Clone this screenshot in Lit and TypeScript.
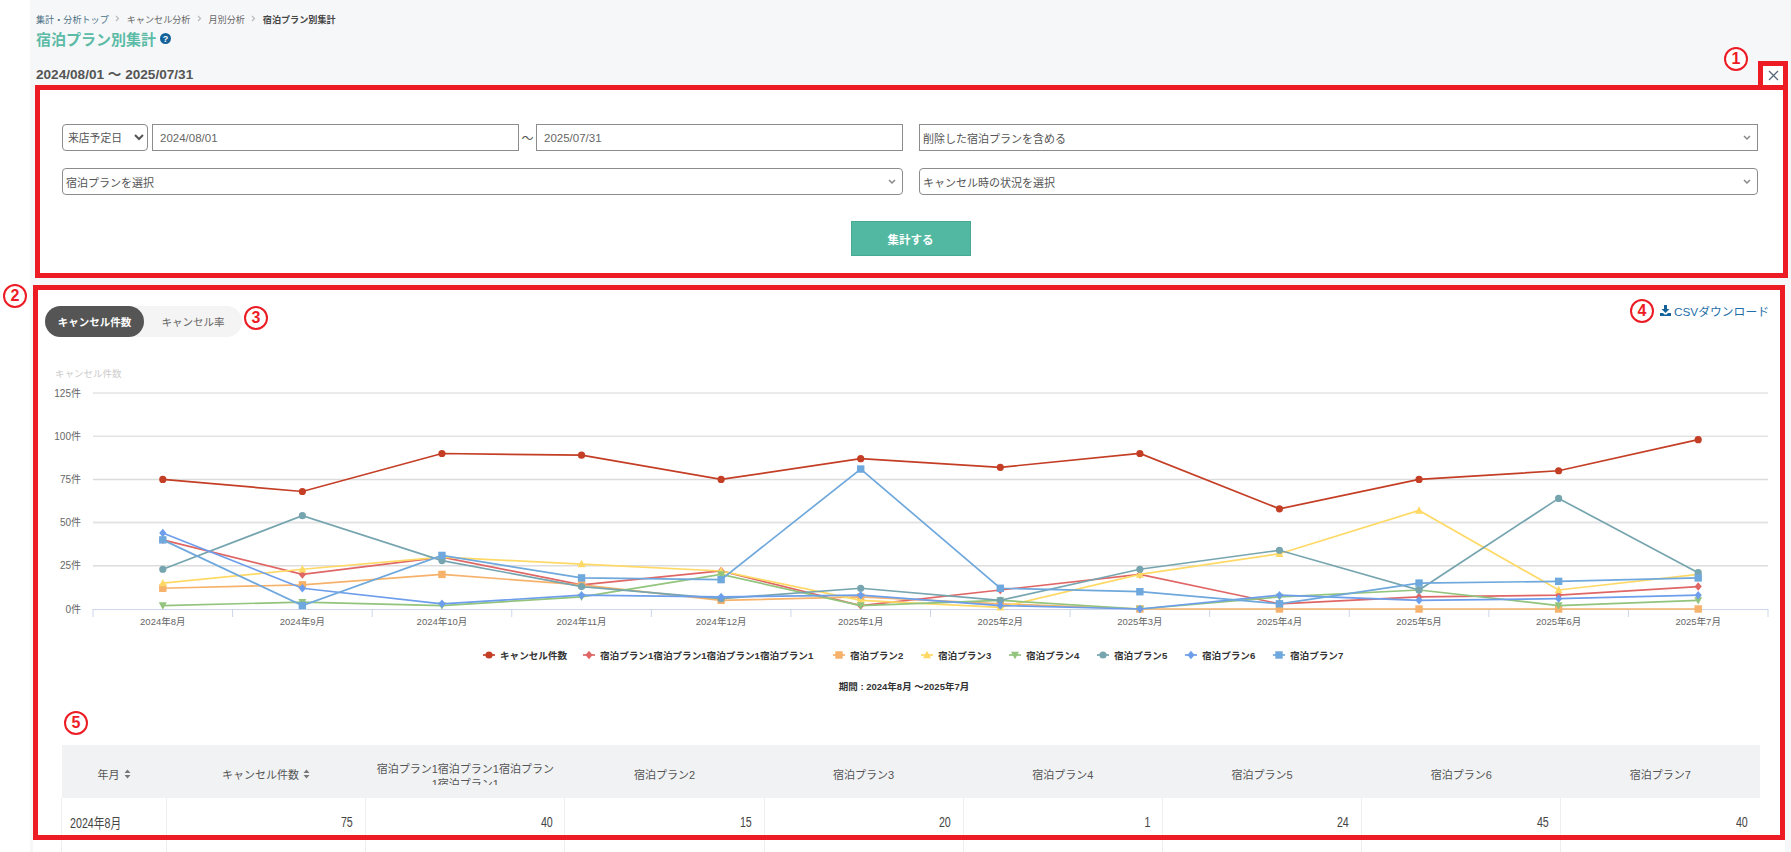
import { LitElement, html, css, svg } from "lit";
import { customElement } from "lit/decorators.js";

const X0 = 93;
const STEP = (1768 - 93) / 12;
const Y0 = 609;
const UNIT = 1.728;
const px = (i: number) => X0 + STEP * (i + 0.5);
const py = (v: number) => Y0 - v * UNIT;

type Shape = "circle" | "diamond" | "square" | "up" | "down";
interface Series { name: string; color: string; shape: Shape; data: number[]; legendX: number; }

const SERIES: Series[] = [
  { name: "キャンセル件数", color: "#c43e25", shape: "circle", legendX: 489, data: [75, 68, 90, 89, 75, 87, 82, 90, 58, 75, 80, 98] },
  { name: "宿泊プラン1宿泊プラン1宿泊プラン1宿泊プラン1", color: "#e06666", shape: "diamond", legendX: 589, data: [40, 20, 30, 14, 22, 2, 11, 20, 3, 7, 8, 13] },
  { name: "宿泊プラン2", color: "#f6b26b", shape: "square", legendX: 839, data: [12, 14, 20, 14, 5, 7, 3, 0, 0, 0, 0, 0] },
  { name: "宿泊プラン3", color: "#ffd966", shape: "up", legendX: 927, data: [15, 23, 30, 26, 22, 5, 1, 20, 32, 57, 11, 20] },
  { name: "宿泊プラン4", color: "#93c47d", shape: "down", legendX: 1015, data: [2, 4, 2, 7, 20, 2, 5, 0, 7, 11, 2, 5] },
  { name: "宿泊プラン5", color: "#76a5af", shape: "circle", legendX: 1103, data: [23, 54, 28, 13, 6, 12, 5, 23, 34, 11, 64, 21] },
  { name: "宿泊プラン6", color: "#6d9eeb", shape: "diamond", legendX: 1191, data: [44, 12, 3, 8, 7, 8, 2, 0, 8, 5, 6, 8] },
  { name: "宿泊プラン7", color: "#6fa8dc", shape: "square", legendX: 1279, data: [40, 2, 31, 18, 17, 81, 12, 10, 3, 15, 16, 18] },
];

const MONTHS = ["2024年8月", "2024年9月", "2024年10月", "2024年11月", "2024年12月", "2025年1月", "2025年2月", "2025年3月", "2025年4月", "2025年5月", "2025年6月", "2025年7月"];
const TICKS: { v: number; color: string; w: number }[] = [
  { v: 0, color: "", w: 0 },
  { v: 25, color: "#dcdcdc", w: 1.5 },
  { v: 50, color: "#e4e4e4", w: 2 },
  { v: 75, color: "#dcdcdc", w: 1.5 },
  { v: 100, color: "#d6d6d6", w: 1 },
  { v: 125, color: "#d6d6d6", w: 1 },
];

const ROWS = [
  ["2024年8月", "75", "40", "15", "20", "1", "24", "45", "40"],
  ["2024年9月", "68", "20", "14", "23", "4", "54", "12", "2"],
];

function marker(x: number, y: number, shape: Shape, color: string) {
  switch (shape) {
    case "circle":
      return svg`<circle cx=${x} cy=${y} r="3.6" fill=${color}></circle>`;
    case "square":
      return svg`<rect x=${x - 3.7} y=${y - 3.7} width="7.4" height="7.4" fill=${color}></rect>`;
    case "diamond":
      return svg`<path d="M${x} ${y - 4.2}L${x + 3.6} ${y}L${x} ${y + 4.2}L${x - 3.6} ${y}Z" fill=${color}></path>`;
    case "up":
      return svg`<path d="M${x} ${y - 4.2}L${x + 4} ${y + 3.2}L${x - 4} ${y + 3.2}Z" fill=${color}></path>`;
    default:
      return svg`<path d="M${x - 4} ${y - 3.2}L${x + 4} ${y - 3.2}L${x} ${y + 4.2}Z" fill=${color}></path>`;
  }
}

@customElement("app-root")
export class AppRoot extends LitElement {
  static styles = css`
    :host {
      display: block;
      position: relative;
      width: 1791px;
      height: 852px;
      overflow: hidden;
      background: #fff;
      font-family: "Liberation Sans", "Noto Sans CJK JP", sans-serif;
      color: #555;
    }
    *, *::after { box-sizing: border-box; }
    .main {
      margin-left: 30px;
      height: 852px;
      background: #f6f7f9;
      padding-top: 12px;
      display: flex;
      flex-direction: column;
    }
    .crumbs {
      display: flex;
      align-items: center;
      height: 13px;
      margin-left: 6px;
      font-size: 9.1px;
      color: #666;
    }
    .crumbs .home { color: #4a6f85; }
    .crumbs .cur { color: #444; font-weight: 700; }
    .crumbs .sep { width: 18px; display: flex; justify-content: center; }
    .title {
      display: flex;
      align-items: center;
      gap: 4px;
      height: 22px;
      margin: 2px 0 0 6px;
      font-size: 15px;
      font-weight: 700;
      color: #5cbba6;
    }
    .period-row {
      display: flex;
      justify-content: space-between;
      align-items: flex-end;
      height: 24px;
      margin: 12px 3px 0 6px;
    }
    .period {
      font-size: 13.6px;
      font-weight: 700;
      color: #555;
      line-height: 18px;
      padding-bottom: 1px;
    }
    .close {
      width: 30px;
      height: 24px;
      border: 5px solid #ed1c24;
      border-bottom: 0;
      background: #fff;
      display: flex;
      align-items: center;
      justify-content: center;
      padding: 0;
    }
    .search {
      width: 1753px;
      height: 193px;
      margin-left: 5px;
      border: 5px solid #ed1c24;
      background: #fff;
      padding: 34px 22px 0;
    }
    .search-grid {
      display: grid;
      grid-template-columns: 841px 839px;
      column-gap: 16px;
      row-gap: 17px;
    }
    .dates { display: flex; align-items: center; width: 841px; }
    select.kind {
      width: 86px;
      height: 27px;
      flex: none;
      border: 1px solid #8c8c8c;
      border-radius: 4px;
      background: #fff;
      font: 10.8px "Liberation Sans", "Noto Sans CJK JP", sans-serif;
      color: #555;
      padding: 0 0 0 1px;
      margin-right: 4px;
    }
    .date {
      flex: 1;
      height: 27px;
      border: 1px solid #8c8c8c;
      background: #fff;
      font-size: 11.5px;
      color: #666;
      display: flex;
      align-items: center;
      padding-left: 7px;
    }
    .wave { width: 17px; flex: none; text-align: center; font-size: 12px; color: #555; }
    .pick {
      height: 27px;
      border: 1px solid #8c8c8c;
      background: #fff;
      font-size: 11px;
      color: #555;
      display: flex;
      align-items: center;
      justify-content: space-between;
      padding: 0 6px 0 3px;
    }
    .pick.round { border-radius: 4px; }
    .actions { display: flex; justify-content: center; margin-top: 26px; padding-right: 2px; }
    .submit {
      width: 120px;
      height: 35px;
      border: 1px solid #47a993;
      background: #52b8a2;
      color: #fff;
      font: 700 11.5px "Liberation Sans", "Noto Sans CJK JP", sans-serif;
      padding: 0;
    }
    .result {
      position: relative;
      width: 1752px;
      height: 567px;
      margin: 7px 0 0 3px;
      background: #fff;
      padding: 21px 5px 0 12px;
      overflow: hidden;
    }
    .result::after {
      content: "";
      position: absolute;
      left: 0;
      right: 0;
      top: 0;
      height: 555px;
      border: 5px solid #ed1c24;
      pointer-events: none;
    }
    .toolbar { display: flex; justify-content: space-between; align-items: flex-start; padding-right: 11px; }
    .toggle {
      display: flex;
      width: 197px;
      height: 31px;
      border-radius: 16px;
      background: #f4f4f4;
      font-size: 10.5px;
    }
    .toggle span { display: flex; align-items: center; justify-content: center; height: 31px; border-radius: 16px; }
    .toggle .on { width: 99px; background: #555; color: #fff; font-weight: 700; }
    .toggle .off { flex: 1; color: #666; }
    .csv {
      display: flex;
      align-items: center;
      gap: 3px;
      height: 14px;
      margin-top: -3px;
      font-size: 11.8px;
      color: #1f6fa8;
    }
    .chart { display: block; width: 1742px; height: 340px; margin: 23px 0 0 -7px; }
    .chart text { font-family: "Liberation Sans", "Noto Sans CJK JP", sans-serif; }
    .tbl {
      width: 1699px;
      margin: 45px 0 0 16px;
      border-collapse: collapse;
      table-layout: fixed;
      font-size: 11px;
      color: #555;
    }
    .first-col { width: 105px; }
    .tbl th {
      height: 53px;
      padding: 4px 0 0;
      background: #f1f2f4;
      font-weight: 400;
      vertical-align: middle;
    }
    .tbl th.wrap { vertical-align: top; padding-top: 17px; }
    .th-in { display: flex; align-items: center; justify-content: center; gap: 4px; }
    .clip {
      height: 23px;
      overflow: hidden;
      line-height: 15px;
      text-align: center;
    }
    .tbl td {
      height: 36px;
      padding: 11px 12px 0 8px;
      text-align: right;
      border-left: 1px solid #eee;
      font-size: 11.5px;
      color: #444;
    }
    .tbl td:first-child { text-align: left; }
    .cell { display: inline-block; transform: scale(0.93, 1.2); transform-origin: right center; }
    td:first-child .cell { transform-origin: left center; }
    .n {
      position: absolute;
      z-index: 2;
      width: 24px;
      height: 24px;
      border: 2.5px solid #ed1c24;
      border-radius: 50%;
      background: #fff;
      color: #ed1c24;
      font: 700 16px/19px "Liberation Sans", sans-serif;
      text-align: center;
    }
    .n1 { left: 1724px; top: 47px; }
    .n2 { left: 3px; top: 284px; }
    .n3 { left: 244px; top: 306px; }
    .n4 { left: 1630px; top: 299px; }
    .n5 { left: 64px; top: 711px; }
  `;

  private chevron() {
    return html`<svg width="8" height="6" viewBox="0 0 8 6"><path d="M1 1l3 3 3-3" fill="none" stroke="#888" stroke-width="1.5"></path></svg>`;
  }

  private sort() {
    return html`<svg width="7" height="10" viewBox="0 0 7 10"><path d="M3.5 0.5L6.5 4H0.5ZM3.5 9.5L0.5 6H6.5Z" fill="#777"></path></svg>`;
  }

  private sep() {
    return html`<span class="sep"><svg width="5" height="7" viewBox="0 0 5 7"><path d="M1 1l2.5 2.5L1 6" fill="none" stroke="#bbb" stroke-width="1.2"></path></svg></span>`;
  }

  private chart() {
    return html`<svg class="chart" viewBox="38 360 1742 340">
      <text x="55" y="377" font-size="9.5" fill="#ccc">キャンセル件数</text>
      ${TICKS.map((t) => svg`
        <text x="81" y=${py(t.v) + 3.5} font-size="10" fill="#666" text-anchor="end">${t.v}件</text>
        ${t.v === 0 ? "" : svg`<line x1="93" x2="1768" y1=${py(t.v)} y2=${py(t.v)} stroke=${t.color} stroke-width=${t.w}></line>`}
      `)}
      <line x1="93" x2="1768" y1="609.5" y2="609.5" stroke="#ccd6eb"></line>
      ${Array.from({ length: 13 }, (_, i) => svg`<line x1=${X0 + STEP * i} x2=${X0 + STEP * i} y1="609" y2="617" stroke="#ccd6eb"></line>`)}
      ${MONTHS.map((m, i) => svg`<text x=${px(i)} y="625" font-size="9.5" fill="#666" text-anchor="middle">${m}</text>`)}
      ${SERIES.map((s) => svg`
        <polyline fill="none" stroke=${s.color} stroke-width="1.7" points=${s.data.map((v, i) => `${px(i)},${py(v)}`).join(" ")}></polyline>
        ${s.data.map((v, i) => marker(px(i), py(v), s.shape, s.color))}
      `)}
      ${SERIES.map((s) => svg`
        <line x1=${s.legendX - 6} x2=${s.legendX + 6} y1="655" y2="655" stroke=${s.color} stroke-width="1.7"></line>
        ${marker(s.legendX, 655, s.shape, s.color)}
        <text x=${s.legendX + 11} y="658.5" font-size="9.6" font-weight="700" fill="#333">${s.name}</text>
      `)}
      <text x="904" y="689.5" font-size="9.5" font-weight="700" fill="#333" text-anchor="middle">期間 : 2024年8月 ～2025年7月</text>
    </svg>`;
  }

  render() {
    return html`
      <div class="main">
        <nav class="crumbs">
          <span class="home">集計・分析トップ</span>${this.sep()}
          <span>キャンセル分析</span>${this.sep()}
          <span>月別分析</span>${this.sep()}
          <span class="cur">宿泊プラン別集計</span>
        </nav>
        <div class="title">
          宿泊プラン別集計
          <svg width="11" height="11" viewBox="0 0 11 11"><circle cx="5.5" cy="5.5" r="5.5" fill="#14629a"></circle><text x="5.5" y="9" font-size="9" font-weight="700" fill="#fff" text-anchor="middle">?</text></svg>
        </div>
        <div class="period-row">
          <div class="period">2024/08/01 ～ 2025/07/31</div>
          <button class="close"><svg width="11" height="11" viewBox="0 0 11 11"><path d="M1 1l9 9M10 1l-9 9" stroke="#56677a" stroke-width="1.3"></path></svg></button>
        </div>
        <section class="search">
          <div class="search-grid">
            <div class="dates">
              <select class="kind"><option>来店予定日</option></select>
              <div class="date">2024/08/01</div>
              <span class="wave">～</span>
              <div class="date">2025/07/31</div>
            </div>
            <div class="pick">削除した宿泊プランを含める ${this.chevron()}</div>
            <div class="pick round">宿泊プランを選択 ${this.chevron()}</div>
            <div class="pick round">キャンセル時の状況を選択 ${this.chevron()}</div>
          </div>
          <div class="actions"><button class="submit">集計する</button></div>
        </section>
        <section class="result">
          <div class="toolbar">
            <div class="toggle"><span class="on">キャンセル件数</span><span class="off">キャンセル率</span></div>
            <div class="csv">
              <svg width="11" height="11" viewBox="0 0 11 11"><path d="M4 0h3v4h2.5L5.5 8 1.5 4H4ZM0 8h3l1.5 1.5h2L8 8h3v3H0Z" fill="#14629a"></path></svg>
              CSVダウンロード
            </div>
          </div>
          ${this.chart()}
          <table class="tbl">
            <colgroup><col class="first-col" />${Array.from({ length: 8 }, () => html`<col />`)}</colgroup>
            <thead>
              <tr>
                <th><div class="th-in">年月 ${this.sort()}</div></th>
                <th><div class="th-in">キャンセル件数 ${this.sort()}</div></th>
                <th class="wrap"><div class="clip">宿泊プラン1宿泊プラン1宿泊プラン<br />1宿泊プラン1</div></th>
                <th>宿泊プラン2</th><th>宿泊プラン3</th><th>宿泊プラン4</th><th>宿泊プラン5</th><th>宿泊プラン6</th><th>宿泊プラン7</th>
              </tr>
            </thead>
            <tbody>
              ${ROWS.map((r) => html`<tr>${r.map((c) => html`<td><span class="cell">${c}</span></td>`)}</tr>`)}
            </tbody>
          </table>
        </section>
      </div>
      <span class="n n1">1</span>
      <span class="n n2">2</span>
      <span class="n n3">3</span>
      <span class="n n4">4</span>
      <span class="n n5">5</span>
    `;
  }
}
